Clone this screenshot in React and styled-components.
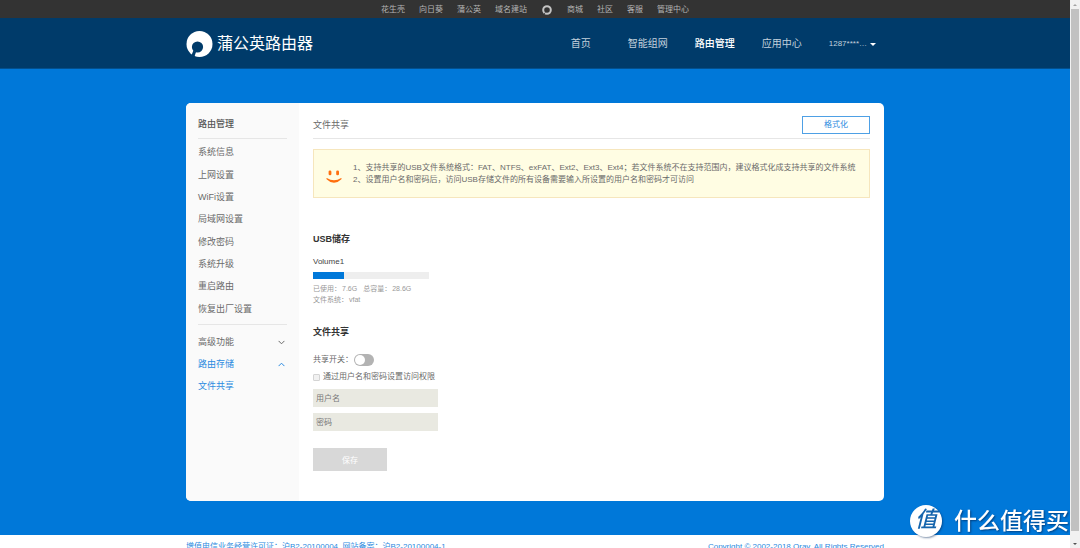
import React from "react";
import styled, { createGlobalStyle } from "styled-components";

const BLUE = "#0078d9";

const Global = createGlobalStyle`
  * { box-sizing: border-box; }
  body {
    margin: 0;
    font-family: "Liberation Sans", "Noto Sans CJK SC", sans-serif;
    font-size: 8px;
    line-height: 12px;
    color: #6a6a6a;
    background: #fff;
  }
  a { color: inherit; text-decoration: none; }
  ul { list-style: none; margin: 0; padding: 0; }
  h1, h2, p { margin: 0; }
  button, input { font-family: inherit; margin: 0; }
`;

const Shell = styled.div`
  display: flex;
  height: 100vh;
  overflow: hidden;
`;

const Page = styled.div`
  flex: 1;
  min-width: 0;
  overflow: hidden;
`;

const Container = styled.div`
  max-width: 698px;
  margin: 0 auto;
`;

const TopBar = styled.nav`
  display: flex;
  justify-content: center;
  align-items: center;
  gap: 14px;
  height: 18px;
  padding-top: 1px;
  background: #333;
  color: #b4b4b4;
`;

const TopIcon = styled.a`
  display: flex;
  justify-content: center;
  width: 12px;
`;

const Header = styled.header`
  background: #003b6a;
  border-bottom: 1px solid #02508f;
`;

const HeaderInner = styled(Container)`
  display: flex;
  justify-content: space-between;
  align-items: center;
  height: 50px;
  padding: 2px 8px 0 0;
`;

const Brand = styled.a`
  display: flex;
  align-items: center;
  gap: 4px;
  font-size: 16px;
  line-height: 24px;
  color: #fff;
`;

const Nav = styled.nav`
  display: flex;
  align-items: center;
  gap: 27px;
`;

const NavLink = styled.a`
  min-width: 30px;
  font-size: 10px;
  line-height: 16px;
  color: ${(p) => (p.$active ? "#fff" : "#c3d1dc")};
  font-weight: ${(p) => (p.$active ? 500 : 400)};
`;

const UserButton = styled.button`
  display: flex;
  align-items: center;
  gap: 3px;
  padding: 0;
  border: 0;
  background: none;
  font-size: 8px;
  line-height: 12px;
  color: #c3d1dc;
`;

const Caret = styled.span`
  border: 3px solid transparent;
  border-top-color: #fff;
  border-bottom: 0;
`;

const Stage = styled.main`
  padding: 34px 0;
  background: ${BLUE};
`;

const Card = styled(Container)`
  display: flex;
  min-height: 398px;
  border-radius: 5px;
  overflow: hidden;
  background: #fff;
`;

const Sidebar = styled.aside`
  width: 113px;
  padding: 13px 12px;
  background: #fafafa;
`;

const SideTitle = styled.h2`
  padding-bottom: 5px;
  border-bottom: 1px solid #e6e6e6;
  font-size: 9px;
  line-height: 17px;
  font-weight: 500;
  color: #555;
`;

const SideList = styled.ul`
  display: grid;
  grid-template-rows: repeat(8, 1fr);
  align-items: center;
  height: 186px;
  padding: 2px 0 4px;
  border-bottom: 1px solid #e6e6e6;
  font-size: 9px;
  line-height: 16px;
`;

const SideGroups = styled.div`
  display: flex;
  flex-direction: column;
  gap: 6px;
  padding-top: 9px;
`;

const GroupButton = styled.button`
  display: flex;
  justify-content: space-between;
  align-items: center;
  width: 100%;
  padding: 0 2px 0 0;
  border: 0;
  background: none;
  text-align: left;
  font-size: 9px;
  line-height: 16px;
  color: ${(p) => (p.$active ? "#2b8ae0" : "#6a6a6a")};
`;

const SubLink = styled.a`
  font-size: 9px;
  line-height: 16px;
  color: #2b8ae0;
`;

const Content = styled.section`
  flex: 1;
  min-width: 0;
  padding: 13px 14px;
`;

const ContentHead = styled.div`
  display: flex;
  justify-content: space-between;
  align-items: center;
  padding-bottom: 4px;
  border-bottom: 1px solid #e6e6e6;
`;

const PageTitle = styled.h1`
  font-size: 9px;
  line-height: 16px;
  font-weight: 400;
`;

const OutlineButton = styled.button`
  width: 68px;
  height: 18px;
  padding: 0;
  border: 1px solid #4ea0e5;
  background: #fff;
  font-size: 8px;
  line-height: 16px;
  color: #2b8ae0;
`;

const Notice = styled.div`
  display: flex;
  align-items: center;
  gap: 11px;
  margin-top: 10px;
  padding: 12px 12px 11px;
  border: 1px solid #f6e6bd;
  background: #fffde3;
`;

const NoticeText = styled.div`
  flex: 1;
  min-width: 0;
`;

const SectionTitle = styled.h2`
  margin-top: ${(p) => p.$top}px;
  font-size: 9px;
  line-height: 16px;
  font-weight: 700;
  color: #333;
`;

const VolumeName = styled.p`
  margin-top: 9px;
  color: #444;
`;

const Meter = styled.div`
  width: 116px;
  height: 7px;
  margin-top: 4px;
  background: #eee;
`;

const MeterFill = styled.div`
  height: 100%;
  background: ${BLUE};
`;

const Meta = styled.dl`
  display: flex;
  flex-wrap: wrap;
  gap: 0 6px;
  width: 116px;
  margin: 4px 0 0;
  font-size: 7px;
  line-height: 11px;
  color: #999;
`;

const MetaItem = styled.div`
  display: flex;
  gap: 1px;
  dd { margin: 0; }
`;

const SwitchRow = styled.label`
  display: flex;
  align-items: center;
  gap: 1px;
  margin-top: 14px;
`;

const Switch = styled.input`
  appearance: none;
  display: flex;
  width: 20px;
  height: 12px;
  padding: 1px;
  border-radius: 6px;
  background: #b3b3b3;
  &::before {
    content: "";
    width: 10px;
    height: 10px;
    border-radius: 50%;
    background: #fff;
  }
`;

const CheckRow = styled.label`
  display: flex;
  align-items: center;
  gap: 3px;
  margin-top: 5px;
`;

const Check = styled.input`
  appearance: none;
  width: 7px;
  height: 7px;
  border: 1px solid #d4d4d4;
  border-radius: 1px;
  background: #f1f1f1;
`;

const Field = styled.input`
  display: block;
  width: 125px;
  height: 18px;
  margin-top: 6px;
  padding: 0 3px;
  border: 0;
  border-radius: 0;
  background: #e9e9e1;
  font-size: 8px;
  color: #666;
  &::placeholder { color: #777; opacity: 1; }
`;

const SaveButton = styled.button`
  display: block;
  width: 74px;
  height: 23px;
  margin-top: 17px;
  padding: 0;
  border: 0;
  background: #d8d8d8;
  font-size: 8px;
  color: #fff;
`;

const Footer = styled(Container).attrs({ as: "footer" })`
  display: flex;
  justify-content: space-between;
  padding: 6px 0;
  color: #2b8ae0;
`;

const ScrollTrack = styled.div`
  display: flex;
  flex-direction: column;
  align-items: center;
  width: 10px;
  background: #f1f1f1;
`;

const ScrollArrow = styled.span`
  margin: 4px 0 3px;
  border: 2px solid transparent;
  border-${(p) => (p.$down ? "top" : "bottom")}-color: ${(p) => (p.$down ? "#505050" : "#a3a3a3")};
  border-${(p) => (p.$down ? "bottom" : "top")}-width: 0;
`;

const ScrollThumb = styled.div`
  flex: 1;
  width: 8px;
  margin-bottom: 8px;
  background: #c1c1c1;
`;

const Watermark = styled.div`
  position: fixed;
  right: 11px;
  bottom: 11px;
  display: flex;
  align-items: center;
  gap: 12px;
  font-size: 23px;
  font-weight: 500;
  line-height: 32px;
  color: #fff;
  text-shadow: 1px 1px 2px rgba(0, 40, 90, 0.7);
`;

const Seal = styled.span`
  width: 32px;
  height: 32px;
  border-radius: 50%;
  background: #fff;
  box-shadow: 1px 1px 2px rgba(0, 40, 90, 0.5);
  text-align: center;
  font-size: 22px;
  font-style: italic;
  line-height: 30px;
  text-shadow: none;
  color: #1565ad;
`;

function LogoMark() {
  return (
    <svg width="27" height="28" viewBox="0 0 27 28" aria-hidden="true">
      <circle cx="13.5" cy="14" r="13" fill="#fff" />
      <circle cx="11.5" cy="17" r="5.6" fill="#003b6a" />
      <path d="M5.4 25.4 L7.4 20.5 L10 22 L8.2 27.4 Z" fill="#003b6a" />
    </svg>
  );
}

function Ring() {
  return (
    <svg width="10" height="10" viewBox="0 0 10 10" aria-hidden="true">
      <circle cx="5" cy="5" r="3.8" fill="none" stroke="#c4c4c4" strokeWidth="2" />
      <path d="M1.6 9.6 L3.4 7.4" stroke="#333" strokeWidth="0.8" />
    </svg>
  );
}

function Smile() {
  return (
    <svg width="16" height="19" viewBox="0 -5 16 19" aria-hidden="true">
      <rect x="2.6" y="0.5" width="2.8" height="4.8" rx="1.3" fill="#ff6f0f" />
      <rect x="10.2" y="0.5" width="2.8" height="4.8" rx="1.3" fill="#ff6f0f" />
      <path d="M0.8 8 Q8 12.6 15.2 8 Q15.8 8.4 15.4 9.2 Q8 16.4 0.6 9.2 Q0.2 8.4 0.8 8 Z" fill="#ff6f0f" />
    </svg>
  );
}

function Chevron({ up }) {
  return (
    <svg width="7" height="5" viewBox="0 0 7 5" aria-hidden="true">
      <path d={up ? "M0.6 4.1 L3.5 1.2 L6.4 4.1" : "M0.6 0.9 L3.5 3.8 L6.4 0.9"} fill="none" stroke="currentColor" strokeWidth="1" />
    </svg>
  );
}

const products = ["花生壳", "向日葵", "蒲公英", "域名建站"];
const services = ["商城", "社区", "客服", "管理中心"];
const navItems = ["首页", "智能组网", "路由管理", "应用中心"];
const settings = ["系统信息", "上网设置", "WiFi设置", "局域网设置", "修改密码", "系统升级", "重启路由", "恢复出厂设置"];
const usage = { used: 7.6, total: 28.6 };

export default function App() {
  return (
    <>
      <Global />
      <Shell>
        <Page>
          <TopBar>
            {products.map((t) => <a href="#" key={t}>{t}</a>)}
            <TopIcon href="#" aria-label="Oray"><Ring /></TopIcon>
            {services.map((t) => <a href="#" key={t}>{t}</a>)}
          </TopBar>
          <Header>
            <HeaderInner>
              <Brand href="#"><LogoMark />蒲公英路由器</Brand>
              <Nav>
                {navItems.map((t) => (
                  <NavLink href="#" key={t} $active={t === "路由管理"}>{t}</NavLink>
                ))}
                <UserButton type="button">1287****…<Caret /></UserButton>
              </Nav>
            </HeaderInner>
          </Header>
          <Stage>
            <Card>
              <Sidebar>
                <SideTitle>路由管理</SideTitle>
                <SideList>
                  {settings.map((t) => <li key={t}><a href="#">{t}</a></li>)}
                </SideList>
                <SideGroups>
                  <GroupButton type="button" aria-expanded="false">高级功能<Chevron /></GroupButton>
                  <GroupButton type="button" aria-expanded="true" $active>路由存储<Chevron up /></GroupButton>
                  <SubLink href="#">文件共享</SubLink>
                </SideGroups>
              </Sidebar>
              <Content>
                <ContentHead>
                  <PageTitle>文件共享</PageTitle>
                  <OutlineButton type="button">格式化</OutlineButton>
                </ContentHead>
                <Notice>
                  <Smile />
                  <NoticeText>
                    <p>1、支持共享的USB文件系统格式：FAT、NTFS、exFAT、Ext2、Ext3、Ext4；若文件系统不在支持范围内，建议格式化成支持共享的文件系统</p>
                    <p>2、设置用户名和密码后，访问USB存储文件的所有设备需要输入所设置的用户名和密码才可访问</p>
                  </NoticeText>
                </Notice>
                <SectionTitle $top={33}>USB储存</SectionTitle>
                <VolumeName>Volume1</VolumeName>
                <Meter>
                  <MeterFill style={{ width: `${(usage.used / usage.total) * 100}%` }} />
                </Meter>
                <Meta>
                  <MetaItem><dt>已使用：</dt><dd>{usage.used}G</dd></MetaItem>
                  <MetaItem><dt>总容量：</dt><dd>{usage.total}G</dd></MetaItem>
                  <MetaItem><dt>文件系统：</dt><dd>vfat</dd></MetaItem>
                </Meta>
                <SectionTitle $top={19}>文件共享</SectionTitle>
                <SwitchRow>共享开关：<Switch type="checkbox" role="switch" /></SwitchRow>
                <CheckRow><Check type="checkbox" />通过用户名和密码设置访问权限</CheckRow>
                <Field type="text" placeholder="用户名" aria-label="用户名" />
                <Field type="password" placeholder="密码" aria-label="密码" />
                <SaveButton type="button">保存</SaveButton>
              </Content>
            </Card>
          </Stage>
          <Footer>
            <a href="#">增值电信业务经营许可证：沪B2-20100004&nbsp; 网站备案：沪B2-20100004-1</a>
            <span>Copyright © 2002-2018 Oray. All Rights Reserved</span>
          </Footer>
        </Page>
        <ScrollTrack aria-hidden="true">
          <ScrollArrow />
          <ScrollThumb />
          <ScrollArrow $down />
        </ScrollTrack>
      </Shell>
      <Watermark><Seal>值</Seal>什么值得买</Watermark>
    </>
  );
}
